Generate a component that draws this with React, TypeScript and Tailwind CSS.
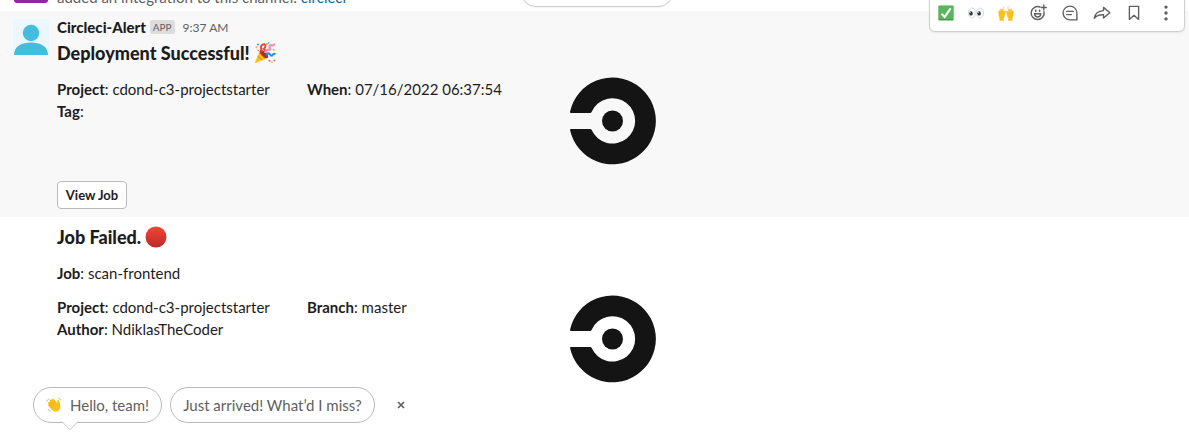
import React from "react";

function Logo() {
  return (
    <svg width="88" height="88" viewBox="0 0 88 88" className="block" fill="#141414">
      <path d="M1.9 36 Q.8 36 1.1 34.6 A43.4 43.4 0 1 1 1.1 53.4 Q.8 52 1.9 52 L21 52 Q22.2 52 22.7 53.2 A22.7 22.7 0 1 0 22.7 34.8 Q22.2 36 21 36Z" transform="translate(0 -.1)" />
      <circle cx="43.5" cy="44" r="10.5" />
    </svg>
  );
}

function Party() {
  return (
    <svg width="22" height="22" viewBox="0 0 22 22" className="block">
      <path d="M6.2 8.2 L14 15.8 L1.8 21 Q.6 21.2 1 20Z" fill="#fcc21b" />
      <path d="M4 14 L8.6 18.2 M5.3 11 L11.2 17" stroke="#e59a12" strokeWidth="1.1" />
      <ellipse cx="10" cy="12" rx="2.3" ry="5.3" transform="rotate(-45 10 12)" fill="#a4321f" />
      <path d="M8.5 10 Q5.5 5 8 3 Q11 1 11.4 4 Q11.5 6 9.8 6.8 Q11.5 8 11 11" fill="none" stroke="#e8453c" strokeWidth="1.9" />
      <path d="M11 11 Q12 7.5 14.5 8 Q17 8 15.6 5.3 Q15 2.5 18 3.3 Q20.5 3.5 20 1.6" fill="none" stroke="#f48fb1" strokeWidth="2.3" />
      <path d="M12 13 Q14.5 10 16 12.5 Q17.5 15 18.8 12.7 Q20 11 21.4 12.4" fill="none" stroke="#2493df" strokeWidth="2.1" />
      <g fill="#fcb51b"><circle cx="13" cy="2" r="1.1" /><circle cx="19.7" cy="7.8" r="1" /><circle cx="2.4" cy="5.3" r="1" /></g>
      <g fill="#f26b8a"><circle cx="4.3" cy="8.3" r=".9" /><circle cx="15.5" cy="18.8" r="1.1" /></g>
      <g fill="#38a7e4"><circle cx="4" cy="2.5" r="1.1" /><circle cx="14.6" cy=".9" r=".8" /></g>
      <circle cx="20.4" cy="18.6" r="1" fill="#f26b8a" />
      <circle cx="18" cy="20.4" r=".8" fill="#fcb51b" />
    </svg>
  );
}

function Wave() {
  return (
    <svg width="16" height="16" viewBox="0 0 16 16" className="block">
      <path d="M2.2 5.2 Q3.2 4.2 4.2 5.2 L3.4 3.6 Q4.2 2 5.6 3 L5.6 2.4 Q6.8 .8 8.1 2.3 L11.3 6.2 L11.2 3.8 Q11.9 2 13.2 3.2 Q14 7 14.4 9.5 Q14.4 13.5 11 14.6 Q8 15.2 6 12.9 L2.4 9 Q1.6 7.6 2.8 7.1 L1.9 6.2 Q1.6 5.7 2.2 5.2Z" fill="#fcc21b" />
      <path d="M4 5 L8 9 M2.8 7.1 L6.6 10.8 M5.6 3 L9.6 7.5" stroke="#e59f19" strokeWidth=".7" fill="none" />
      <path d="M.7 4.7 Q1 2.5 3.3 1.9 M2 11.8 Q2.8 14 5 14.5 M12.3 1 Q14.3 1.4 14.9 3.3" stroke="#a9b8bf" strokeWidth=".9" fill="none" />
    </svg>
  );
}

function Check() {
  return (
    <svg width="16" height="16" viewBox="0 0 16 16" className="block">
      <rect x=".4" y=".4" width="15.2" height="15.2" rx="1.2" fill="#43a047" />
      <rect x="1" y=".9" width="14" height="13" rx=".8" fill="#58b65c" />
      <path d="M3.6 8.6 L6.6 12 L12.6 3.4" stroke="#fff" strokeWidth="2.1" fill="none" />
    </svg>
  );
}

function Eyes() {
  return (
    <svg width="16" height="16" viewBox="0 0 16 16" className="block">
      <g fill="#fafafa" stroke="#c9cdd0" strokeWidth=".7">
        <ellipse cx="3.9" cy="8" rx="3.5" ry="5.1" />
        <ellipse cx="12.1" cy="8" rx="3.5" ry="5.1" />
      </g>
      <ellipse cx="3" cy="8.4" rx="1.7" ry="2.2" fill="#263238" />
      <ellipse cx="11.1" cy="8.4" rx="1.7" ry="2.2" fill="#263238" />
      <circle cx="2.3" cy="7.6" r=".6" fill="#c9d0d3" />
      <circle cx="10.4" cy="7.6" r=".6" fill="#c9d0d3" />
    </svg>
  );
}

function Hands() {
  const hand = "M.8 8.2 Q.3 5.6 1.3 5.6 Q2 5.6 2.2 8 L2.5 4.3 Q2.8 3 3.5 4.3 L3.9 7 L4.5 4 Q5.2 3.1 5.5 4.4 L5.4 8.2 L6.5 6 Q7.6 5.7 7.4 7 L6.6 11 Q6.2 12.5 5.6 13 L5.6 15.6 L1.8 15.6 L1.8 13.4 Q.7 11 .8 8.2Z";
  return (
    <svg width="16" height="16" viewBox="0 0 16 16" className="block">
      <g fill="#fcc21b" stroke="#f0b017" strokeWidth=".4">
        <path d={hand} />
        <path d={hand} transform="translate(16 0) scale(-1 1)" />
      </g>
      <path d="M6.3 3.5 L5.7 1.5 M9.7 3.5 L10.3 1.5" stroke="#fbb594" strokeWidth=".9" />
    </svg>
  );
}

function ToolIcon({ children }: { children: React.ReactNode }) {
  return (
    <svg width="18" height="18" viewBox="0 0 18 18" className="block" fill="none" stroke="#616061" strokeWidth="1.4" strokeLinecap="round" strokeLinejoin="round">
      {children}
    </svg>
  );
}

function Toolbar() {
  return (
    <div className="absolute -top-2 left-[929px] flex h-[40px] w-[256px] items-center rounded-md border border-[#d0d0d0] bg-white pt-[2px] pl-[8px] shadow-[0_1px_2px_rgba(0,0,0,0.08)]">
      <div className="flex w-[30px]"><Check /></div>
      <div className="flex w-[30px]"><Eyes /></div>
      <div className="flex w-[31px]"><Hands /></div>
      <div className="flex w-[32px]">
        <ToolIcon>
          <path d="M11.1 3 A6.5 6.5 0 1 0 15 7.6" />
          <path d="M14.8 1 V6 M12.3 3.5 H17.3" />
          <path d="M5.5 9.8 H11.8 Q11.4 13 8.7 13 Q6 13 5.5 9.8Z" />
          <path d="M6.7 6.4 V7.3 M10.6 6.4 V7.3" strokeWidth="1.6" />
        </ToolIcon>
      </div>
      <div className="flex w-[32px]">
        <ToolIcon>
          <path d="M15.9 15.9 H9 A6.9 6.9 0 1 1 15.9 9Z" />
          <path d="M5.7 7.4 H12.3 M5.7 10.6 H10.4" />
        </ToolIcon>
      </div>
      <div className="flex w-[32px]">
        <ToolIcon>
          <path d="M10.5 3.4 L16.8 8.7 L10.5 14 V10.8 Q4.9 10.2 1.3 14.2 Q2.2 7.2 10.5 6.6Z" />
        </ToolIcon>
      </div>
      <div className="flex w-[32px]">
        <ToolIcon>
          <path d="M4.4 2.4 H13.6 V15.4 L9 11.2 L4.4 15.4Z" />
        </ToolIcon>
      </div>
      <ToolIcon>
        <g fill="#616061" stroke="none"><circle cx="9" cy="3.1" r="1.7" /><circle cx="9" cy="9" r="1.7" /><circle cx="9" cy="14.9" r="1.7" /></g>
      </ToolIcon>
    </div>
  );
}

function Field({ label, value = "" }: { label: string; value?: string }) {
  return (
    <p className="w-[250px] whitespace-nowrap"><b className="font-bold">{label}</b>: {value}</p>
  );
}

export default function App() {
  return (
    <div className="relative h-[439px] w-full overflow-hidden bg-white font-['Lato',sans-serif] text-[15px] leading-[22px] text-[#1d1c1d]">
      <div className="flex h-[11px] items-start overflow-hidden pl-[14px]">
        <div className="-mt-[33px] h-[36px] w-[34px] rounded-[3px] bg-[#8b2a9b]" />
        <p className="-mt-[14px] ml-[9px] whitespace-nowrap text-[#616061]">added an integration to this channel: <span className="text-[#1264a3]">circleci</span></p>
      </div>
      <div className="absolute -top-[23px] left-[521px] h-[30px] w-[152px] rounded-full border border-[#d0d0d0] bg-white shadow-[0_1px_1px_rgba(0,0,0,0.06)]" />

      <section className="flex h-[206px] bg-[#f8f8f8]">
        <div className="w-[57px] pt-[8px] pl-[13px]">
          <svg width="36" height="36" viewBox="0 0 36 36" className="block">
            <rect width="36" height="36" rx="3" fill="#ebf7fd" />
            <g fill="#43bce0"><circle cx="18" cy="14" r="8.2" /><path d="M1 36 C1 27 9 23.5 18 23.5 S35 27 35 36Z" /></g>
          </svg>
        </div>
        <div className="w-[512px]">
          <div className="mt-[5px] flex h-[22px] items-center">
            <span className="font-black">Circleci-Alert</span>
            <span className="ml-[4px] flex h-[14px] items-center rounded-[2px] bg-[#dddddd] px-[3px] text-[10px] leading-none text-[#616061]">APP</span>
            <time className="ml-[8px] pt-px text-[12px] text-[#616061]">9:37 AM</time>
          </div>
          <h2 className="flex h-[30px] items-center gap-[4px] text-[18px] font-black">Deployment Successful! <Party /></h2>
          <div className="mt-[10px] flex"><Field label="Project" value="cdond-c3-projectstarter" /><Field label="When" value="07/16/2022 06:37:54" /></div>
          <Field label="Tag" />
          <button className="mt-[59px] flex h-[28px] w-[70px] items-center justify-center rounded-[4px] border border-[#bbbabb] bg-white text-[13px] font-bold">View Job</button>
        </div>
        <div className="pt-[66px]"><Logo /></div>
      </section>

      <section className="flex h-[170px] pl-[57px]">
        <div className="w-[512px]">
          <h2 className="mt-[5px] flex h-[30px] items-center gap-[4px] text-[18px] font-black">
            Job Failed.
            <svg width="22" height="22" viewBox="0 0 22 22" className="block">
              <defs><linearGradient id="red" x1="0" y1="0" x2="0" y2="1"><stop stopColor="#f44336" /><stop offset="1" stopColor="#b92c2a" /></linearGradient></defs>
              <circle cx="11" cy="11" r="10.5" fill="url(#red)" />
            </svg>
          </h2>
          <div className="mt-[10px]"><Field label="Job" value="scan-frontend" /></div>
          <div className="mt-[12px] flex"><Field label="Project" value="cdond-c3-projectstarter" /><Field label="Branch" value="master" /></div>
          <Field label="Author" value="NdiklasTheCoder" />
        </div>
        <div className="pt-[78px]"><Logo /></div>
      </section>

      <footer className="flex items-center pl-[33px] text-[#616061]">
        <button className="relative flex h-[36px] w-[129px] items-center rounded-full border border-[#bbbabb] pl-[12px]">
          <Wave /><span className="ml-[8px] whitespace-nowrap">Hello, team!</span>
          <svg width="18" height="10" viewBox="0 0 18 10" className="absolute top-[33px] left-[27px]"><path d="M1 .5 L9 8.8 L17 .5" fill="#fff" stroke="#c9c8c9" /></svg>
        </button>
        <button className="ml-[8px] h-[36px] w-[205px] rounded-full border border-[#bbbabb] whitespace-nowrap">Just arrived! What’d I miss?</button>
        <svg width="10" height="10" viewBox="0 0 10 10" className="ml-[21px]"><path d="M2 2 L8 8 M8 2 L2 8" stroke="#616061" strokeWidth="1.7" /></svg>
      </footer>
      <Toolbar />
    </div>
  );
}
